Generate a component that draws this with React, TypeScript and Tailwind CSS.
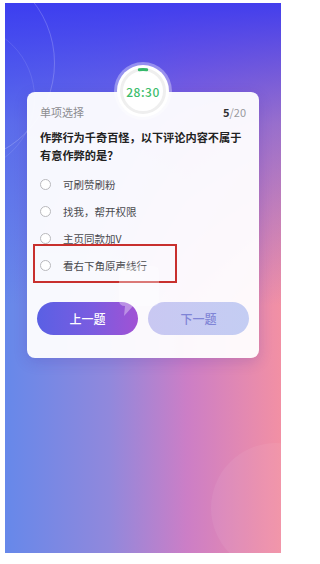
const options = ['可刷赞刷粉', '找我，帮开权限', '主页同款加V', '看右下角原声线行']

function Timer() {
  return (
    <div className="absolute left-1/2 top-[-27px] h-[52px] w-[52px] -translate-x-1/2 rounded-full bg-white shadow-[0_0_0_3px_rgba(255,255,255,0.35)]">
      <svg className="absolute inset-0" width="52" height="52" viewBox="0 0 52 52">
        <circle cx="26" cy="26" r="21.5" fill="none" stroke="#efefef" strokeWidth="3" />
        {/* remaining time arc */}
        <path d="M22.3 4.8 A21.5 21.5 0 0 1 29.7 4.8" fill="none" stroke="#34b86a" strokeWidth="3" strokeLinecap="round" />
      </svg>
      <div className="relative flex h-full items-center justify-center pt-[1px] text-[12px] font-medium tracking-[0.5px] text-[#3dbd6c]">
        28:30
      </div>
    </div>
  )
}

function Option({ label, marked }: { label: string; marked?: boolean }) {
  return (
    <div className="relative flex h-[27px] items-center gap-[12px]">
      <span className="h-[11px] w-[11px] shrink-0 rounded-full border border-[#b9b9bd] bg-white" />
      <span className="text-[10.5px] text-[#4a4a4e]">{label}</span>
      {marked && (
        <div className="pointer-events-none absolute left-[-7px] top-[-8px] h-[39px] w-[144px] border-2 border-[#c8302e]" />
      )}
    </div>
  )
}

export default function App() {
  return (
    <div className="h-[564px] w-[287px] bg-white pl-[5px] pt-[3px] font-['Noto_Sans_CJK_SC','Noto_Sans',sans-serif]">
      <div className="relative h-[550px] w-[276px] overflow-hidden bg-[linear-gradient(180deg,rgba(58,58,240,0.95)_0%,rgba(80,84,236,0.55)_22%,rgba(120,120,230,0)_55%),linear-gradient(90deg,#6688ea_0%,#9188dc_38%,#cc7ec6_66%,#f290a4_100%)]">
        {/* decorative rings */}
        <div className="absolute left-[-150px] top-[-40px] h-[200px] w-[200px] rounded-full border border-white/20" />
        <div className="absolute left-[-120px] top-[20px] h-[150px] w-[150px] rounded-full border border-white/10" />
        <div className="absolute right-[-60px] top-[440px] h-[130px] w-[130px] rounded-full bg-white/[0.06]" />

        <div className="px-[22px] pt-[89px]">
          <div className="relative rounded-[8px] bg-white/95 px-[13px] pb-[23px] pt-[12px] shadow-[0_4px_14px_rgba(60,40,160,0.18)]">
            <Timer />

            <div className="flex items-center justify-between text-[11px] leading-[16px]">
              <span className="text-[#8c8c90]">单项选择</span>
              <span className="text-[#9a9a9e]">
                <span className="font-bold text-[#333]">5</span>/20
              </span>
            </div>

            <p className="mt-[8px] text-[11.2px] font-bold leading-[18px] text-[#222]">
              作弊行为千奇百怪，以下评论内容不属于有意作弊的是？
            </p>

            <div className="mt-[7px] flex flex-col">
              {options.map((o, i) => (
                <Option key={o} label={o} marked={i === 3} />
              ))}
            </div>

            <div className="relative mx-[-3px] mt-[23px] flex gap-[10px]">
              <button className="h-[33px] flex-1 rounded-full bg-[linear-gradient(90deg,#5a60e4_0%,#7a5ce0_55%,#a152d4_100%)] text-[12px] font-medium text-white">
                上一题
              </button>
              <button className="h-[33px] flex-1 rounded-full bg-[linear-gradient(90deg,#c9c8f2_0%,#c4cdf3_100%)] text-[12px] font-medium text-[#7f84d6]">
                下一题
              </button>
              {/* faint bubble overlay */}
              <svg className="pointer-events-none absolute left-[82px] top-[-36px]" width="40" height="52" viewBox="0 0 40 52">
                <path d="M6 0 H34 Q40 0 40 6 V34 Q40 40 34 40 H14 L5 50 L6 40 Q0 40 0 34 V6 Q0 0 6 0 Z" fill="#ffffff" fillOpacity="0.35" />
              </svg>
            </div>
          </div>
        </div>
      </div>
    </div>
  )
}
